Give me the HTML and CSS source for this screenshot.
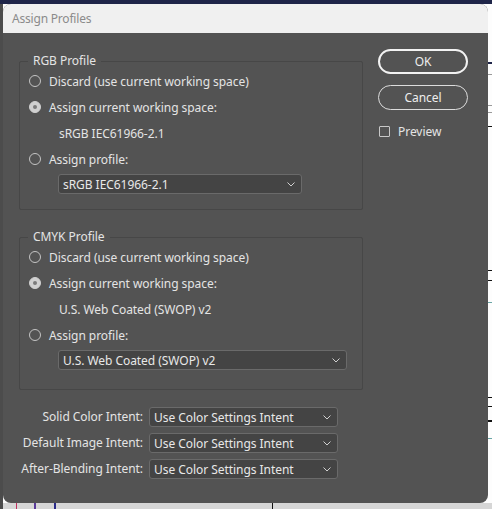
FILE: index.html
```html
<!DOCTYPE html>
<html>
<head>
<meta charset="utf-8">
<link rel="stylesheet" href="styles.css">
</head>
<body>
<div class="desk">
  <div class="dialog">
    <div class="titlebar">Assign Profiles</div>
    <div class="content">
      <div class="left">
        <fieldset class="group group-rgb">
          <legend>RGB Profile</legend>
          <div class="row"><span class="radio"></span><span>Discard (use current working space)</span></div>
          <div class="row"><span class="radio on"></span><span>Assign current working space:</span></div>
          <div class="row sub">sRGB IEC61966-2.1</div>
          <div class="row"><span class="radio"></span><span>Assign profile:</span></div>
          <div class="select sel-rgb"><span>sRGB IEC61966-2.1</span><svg class="chev" width="8" height="5" viewBox="0 0 8 5"><polyline points="0.5,0.5 4,4 7.5,0.5" fill="none" stroke="#d0d0d0" stroke-width="1"/></svg></div>
        </fieldset>
        <fieldset class="group group-cmyk">
          <legend>CMYK Profile</legend>
          <div class="row"><span class="radio"></span><span>Discard (use current working space)</span></div>
          <div class="row"><span class="radio on"></span><span>Assign current working space:</span></div>
          <div class="row sub">U.S. Web Coated (SWOP) v2</div>
          <div class="row"><span class="radio"></span><span>Assign profile:</span></div>
          <div class="select sel-cmyk"><span>U.S. Web Coated (SWOP) v2</span><svg class="chev" width="8" height="5" viewBox="0 0 8 5"><polyline points="0.5,0.5 4,4 7.5,0.5" fill="none" stroke="#d0d0d0" stroke-width="1"/></svg></div>
        </fieldset>
        <div class="intents">
          <div class="lbl">Solid Color Intent:</div>
          <div class="select"><span>Use Color Settings Intent</span><svg class="chev" width="8" height="5" viewBox="0 0 8 5"><polyline points="0.5,0.5 4,4 7.5,0.5" fill="none" stroke="#d0d0d0" stroke-width="1"/></svg></div>
          <div class="lbl">Default Image Intent:</div>
          <div class="select"><span>Use Color Settings Intent</span><svg class="chev" width="8" height="5" viewBox="0 0 8 5"><polyline points="0.5,0.5 4,4 7.5,0.5" fill="none" stroke="#d0d0d0" stroke-width="1"/></svg></div>
          <div class="lbl">After-Blending Intent:</div>
          <div class="select"><span>Use Color Settings Intent</span><svg class="chev" width="8" height="5" viewBox="0 0 8 5"><polyline points="0.5,0.5 4,4 7.5,0.5" fill="none" stroke="#d0d0d0" stroke-width="1"/></svg></div>
        </div>
      </div>
      <div class="right">
        <div class="btn primary">OK</div>
        <div class="btn">Cancel</div>
        <div class="check"><span class="box"></span><span>Preview</span></div>
      </div>
    </div>
  </div>
</div>
</body>
</html>
```
FILE: styles.css
```css
html, body {
  margin: 0;
  padding: 0;
}
body {
  width: 492px;
  height: 509px;
  overflow: hidden;
  font-family: "Noto Sans", "Open Sans", sans-serif;
  font-size: 12px;
  letter-spacing: -0.05px;
  color: #e4e4e4;
}
.desk {
  width: 492px;
  height: 509px;
  padding: 4px 0 0 3px;
  box-sizing: border-box;
  background:
    linear-gradient(#1f2549, #1f2549) 0 0 / 492px 4px no-repeat,
    linear-gradient(#4c4c4c, #4c4c4c) 0 0 / 3px 509px no-repeat,
    linear-gradient(#1f2549, #1f2549) 488px 62px / 4px 2px no-repeat,
    linear-gradient(#9a9a9a, #9a9a9a) 488px 74px / 4px 1px no-repeat,
    linear-gradient(#9a9a9a, #9a9a9a) 488px 105px / 4px 1px no-repeat,
    linear-gradient(#9a9a9a, #9a9a9a) 488px 112px / 4px 1px no-repeat,
    linear-gradient(#111, #111) 488px 126px / 4px 1px no-repeat,
    linear-gradient(#111, #111) 488px 270px / 4px 1px no-repeat,
    linear-gradient(#111, #111) 488px 280px / 4px 1px no-repeat,
    linear-gradient(#6aa6a6, #6aa6a6) 488px 302px / 4px 1px no-repeat,
    linear-gradient(#111, #111) 488px 397px / 4px 1px no-repeat,
    linear-gradient(#111, #111) 488px 406px / 4px 1px no-repeat,
    linear-gradient(#111, #111) 488px 420px / 4px 2px no-repeat,
    linear-gradient(#6aa6a6, #6aa6a6) 488px 438px / 4px 1px no-repeat,
    linear-gradient(#c03060, #c03060) 16px 503px / 1px 6px no-repeat,
    linear-gradient(#5a3a9a, #5a3a9a) 34px 503px / 2px 6px no-repeat,
    linear-gradient(#2a2a8a, #2a2a8a) 54px 503px / 2px 6px no-repeat,
    linear-gradient(#111, #111) 272px 503px / 1px 6px no-repeat,
    linear-gradient(#d6d6d6, #d6d6d6) 0 503px / 492px 6px no-repeat,
    #fdfdfd;
}
.dialog {
  width: 485px;
  height: 499px;
  background: #535353;
  border-radius: 8px;
  overflow: hidden;
  display: flex;
  flex-direction: column;
}
.titlebar {
  height: 29px;
  flex: none;
  background: #f0f0f0;
  color: #8b8b8b;
  font-size: 12px;
  letter-spacing: -0.2px;
  line-height: 30px;
  padding-left: 9px;
}
.content {
  display: flex;
  align-items: flex-start;
  padding-left: 16px;
}
.left {
  width: 344px;
  padding-top: 21px;
}
.group {
  margin: 0;
  padding: 0 0 15px 0;
  border: 1px solid #474747;
  border-radius: 2px;
  min-width: 0;
}
.group legend {
  margin-left: 8px;
  padding: 0 5px;
  line-height: 14px;
  color: #e4e4e4;
}
.group-cmyk {
  margin-top: 20px;
  padding-bottom: 19px;
}
.row {
  height: 26px;
  display: flex;
  align-items: center;
  padding-left: 9px;
  white-space: nowrap;
}
.row.sub {
  padding-left: 39px;
}
.radio {
  width: 10px;
  height: 10px;
  border: 1px solid #c4c4c4;
  border-radius: 50%;
  margin-right: 8px;
  flex: none;
  display: flex;
  align-items: center;
  justify-content: center;
}
.radio.on {
  background: #d0d0d0;
  border-color: #d0d0d0;
}
.radio.on::after {
  content: "";
  width: 4px;
  height: 4px;
  border-radius: 50%;
  background: #7a7a7a;
}
.select {
  height: 20px;
  box-sizing: border-box;
  border: 1px solid #6a6a6a;
  border-radius: 3px;
  background: #444444;
  display: flex;
  align-items: center;
  justify-content: space-between;
  padding: 0 6px 0 4px;
  white-space: nowrap;
  color: #e8e8e8;
}
.group .select {
  margin: 2px 0 0 38px;
}
.sel-rgb {
  width: 244px;
}
.sel-cmyk {
  width: 289px;
}
.chev {
  flex: none;
}
.intents {
  margin-top: 17px;
  display: grid;
  grid-template-columns: 124px 189px;
  column-gap: 6px;
  row-gap: 6px;
}
.lbl {
  text-align: right;
  line-height: 20px;
  white-space: nowrap;
}
.right {
  margin-left: 15px;
  padding-top: 16px;
  width: 90px;
}
.btn {
  height: 25px;
  box-sizing: border-box;
  border: 1px solid #dcdcdc;
  border-radius: 13px;
  display: flex;
  align-items: center;
  justify-content: center;
  color: #eeeeee;
  margin-top: 11px;
}
.btn.primary {
  border: 2px solid #f2f2f2;
  margin-top: 0;
}
.check {
  display: flex;
  align-items: center;
  margin-top: 15px;
  padding-left: 1px;
  height: 12px;
}
.check .box {
  width: 9px;
  height: 9px;
  border: 1px solid #c8c8c8;
  border-radius: 1px;
  margin-right: 8px;
}
```
